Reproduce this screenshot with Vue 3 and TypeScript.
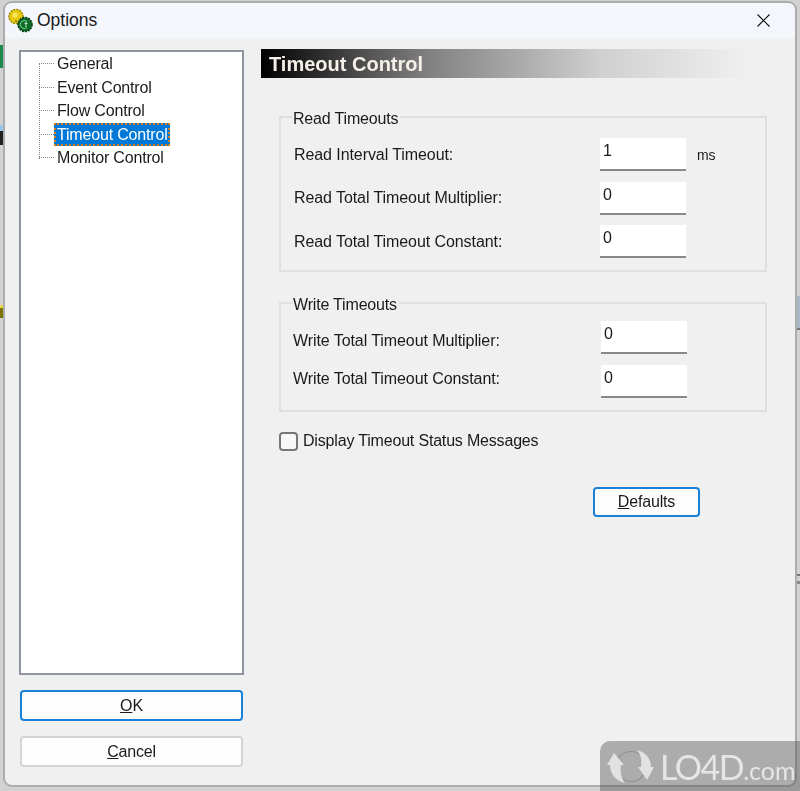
<script setup lang="ts">
interface Field {
  label: string
  value: string
  unit?: string
}

const treeItems = ['General', 'Event Control', 'Flow Control', 'Timeout Control', 'Monitor Control']
const selected = 'Timeout Control'

const readFields: Field[] = [
  { label: 'Read Interval Timeout:', value: '1', unit: 'ms' },
  { label: 'Read Total Timeout Multiplier:', value: '0' },
  { label: 'Read Total Timeout Constant:', value: '0' },
]

const writeFields: Field[] = [
  { label: 'Write Total Timeout Multiplier:', value: '0' },
  { label: 'Write Total Timeout Constant:', value: '0' },
]
</script>

<template>
  <div class="desktop">
    <div class="dialog">
      <header class="titlebar">
        <svg class="app-icon" width="27" height="26" viewBox="0 0 27 26">
          <circle cx="8" cy="8.5" r="7" fill="#e8c810" stroke="#a08c00" stroke-width="1.6" stroke-dasharray="2 1" />
          <circle cx="7" cy="7" r="2.5" fill="#f7ea5a" />
          <circle cx="8" cy="13" r="1" fill="#8a7a00" />
          <circle cx="17" cy="16.5" r="7" fill="#0c6b26" stroke="#07401a" stroke-width="1.6" stroke-dasharray="2 1" />
          <path d="M19 13.5 A4 4 0 1 0 19 19.5" fill="none" stroke="#7fd095" stroke-width="1" />
          <path d="M18 14 V19 M16.5 15.5 H19.5" stroke="#b6e6c2" stroke-width="1" fill="none" />
        </svg>
        <span class="title">Options</span>
        <svg class="close" width="13" height="13" viewBox="0 0 13 13">
          <path d="M0.5 0.5 L12.5 12.5 M12.5 0.5 L0.5 12.5" stroke="#111" stroke-width="1.1" fill="none" />
        </svg>
      </header>

      <div class="content">
        <aside class="left">
          <div class="tree">
            <ul class="tree-list">
              <li v-for="item in treeItems" :key="item" class="tree-item">
                <span class="tree-dash"></span>
                <span class="tree-label" :class="{ selected: item === selected }">{{ item }}</span>
              </li>
            </ul>
          </div>
          <button class="btn btn-default btn-wide"><u>O</u>K</button>
          <button class="btn btn-wide"><u>C</u>ancel</button>
        </aside>

        <main class="right">
          <h1 class="banner">Timeout Control</h1>

          <fieldset class="group group-read">
            <legend>Read Timeouts</legend>
            <div v-for="f in readFields" :key="f.label" class="field">
              <label>{{ f.label }}</label>
              <div class="input">{{ f.value }}</div>
              <span v-if="f.unit" class="unit">{{ f.unit }}</span>
            </div>
          </fieldset>

          <fieldset class="group group-write">
            <legend>Write Timeouts</legend>
            <div v-for="f in writeFields" :key="f.label" class="field">
              <label>{{ f.label }}</label>
              <div class="input">{{ f.value }}</div>
            </div>
          </fieldset>

          <div class="check-row">
            <span class="checkbox"></span>
            <span>Display Timeout Status Messages</span>
          </div>

          <div class="defaults-row">
            <button class="btn btn-default btn-defaults"><u>D</u>efaults</button>
          </div>
        </main>
      </div>
    </div>

    <div class="watermark">
      <svg class="wm-logo" width="50" height="37" viewBox="0 0 50 37">
        <circle cx="24" cy="18.5" r="15" fill="none" stroke="#8f8f8f" stroke-width="1.2" />
        <path d="M7 5 L0 17 H3 C3 26 9 33 18 35 C14 30 13 24 14 17 H17 Z" fill="#e2e2e2" />
        <path d="M40 32 L47 19 H44 C44 10 38 4 30 2 C34 7 35 12 34 19 H31 Z" fill="#e2e2e2" />
      </svg>
      <span class="wm-text">LO4D<small>.com</small></span>
    </div>
  </div>
</template>

<style scoped>
.desktop {
  position: relative;
  box-sizing: border-box;
  width: 800px;
  height: 791px;
  padding: 1px 3px 4px 3px;
  overflow: hidden;
  /* bits of the windows behind the dialog */
  background:
    linear-gradient(#1c8a4c, #1c8a4c) 0 45px / 4px 23px no-repeat,
    linear-gradient(#9fc4e4, #9fc4e4) 0 125px / 4px 6px no-repeat,
    linear-gradient(#222, #222) 0 131px / 4px 14px no-repeat,
    linear-gradient(#e6d84a, #e6d84a) 0 305px / 4px 3px no-repeat,
    linear-gradient(#7d7400, #7d7400) 0 308px / 4px 10px no-repeat,
    linear-gradient(#a9b6c6, #a9b6c6) 797px 296px / 3px 32px no-repeat,
    linear-gradient(#777, #777) 797px 328px / 3px 2px no-repeat,
    linear-gradient(#777, #777) 797px 574px / 3px 2px no-repeat,
    linear-gradient(#888, #888) 797px 581px / 3px 3px no-repeat,
    #d2d2d2;
  font-family: "Liberation Sans", Arial, sans-serif;
  font-size: 16px;
  letter-spacing: -0.18px;
  color: #1a1a1a;
}

.dialog {
  box-sizing: border-box;
  height: 100%;
  display: flex;
  flex-direction: column;
  background: #f0f0f0;
  border: 2px solid #adadad;
  border-radius: 9px;
  overflow: hidden;
  filter: blur(0.3px);
}

.titlebar {
  flex: none;
  height: 35px;
  display: flex;
  align-items: center;
  padding: 0 25px 0 3px;
  background: #f3f6fb;
}

.app-icon {
  margin-right: 2px;
}

.title {
  font-size: 17.5px;
  letter-spacing: 0;
  flex: 1;
}

.content {
  flex: 1;
  display: flex;
  min-height: 0;
}

.left {
  flex: none;
  width: 238px;
  padding: 12px 0 0 14px;
  box-sizing: border-box;
  display: flex;
  flex-direction: column;
}

.tree {
  box-sizing: border-box;
  width: 225px;
  height: 625px;
  background: #fff;
  border: 2px solid #8f96a0;
}

.tree-list {
  position: relative;
  list-style: none;
  margin: 0;
  padding: 0 0 0 18px;
}

.tree-list::before {
  content: '';
  position: absolute;
  left: 18px;
  top: 11px;
  bottom: 11px;
  border-left: 1px dotted #888;
}

.tree-item {
  height: 23.5px;
  display: flex;
  align-items: center;
}

.tree-dash {
  width: 15px;
  border-top: 1px dotted #888;
}

.tree-label {
  padding: 0 0 0 1px;
  line-height: 19px;
  white-space: nowrap;
  border: 2px solid transparent;
}

.tree-label.selected {
  background: #0078d7;
  color: #fff;
  border: 2px dotted #d9791a;
}

.btn {
  box-sizing: border-box;
  font: inherit;
  letter-spacing: inherit;
  color: inherit;
  background: #fdfdfd;
  border: 2px solid #d4d4d4;
  border-radius: 4px;
  padding: 0;
}

.btn-default {
  border-color: #1a80d8;
}

.btn-wide {
  width: 223px;
  height: 31px;
  margin-left: 1px;
}

.btn-wide.btn-default {
  margin-top: 15px;
  margin-bottom: 15px;
}

.right {
  flex: 1;
  min-width: 0;
  padding: 11px 0 0 18px;
  box-sizing: border-box;
}

.banner {
  box-sizing: border-box;
  margin: 0;
  width: 487px;
  height: 29px;
  padding-left: 8px;
  font-size: 20px;
  letter-spacing: 0;
  line-height: 30px;
  font-weight: 700;
  color: #f6f1e8;
  background: linear-gradient(90deg, #000 0%, #808080 34%, #d0d0d0 70%, #f0f0f0 100%);
}

.group {
  box-sizing: border-box;
  width: 488px;
  margin: 0 0 0 18px;
  padding: 0;
  border: 2px solid #dfdfdf;
}

.group legend {
  margin-left: 11px;
  padding: 4px 2px 0 1px;
  line-height: 20px;
}

.group-read {
  height: 167px;
  margin-top: 27px;
  padding-top: 4px;
}

.group-write {
  height: 121px;
  margin-top: 19px;
  padding-top: 1px;
}

.field {
  display: flex;
  align-items: center;
  height: 43.5px;
  letter-spacing: -0.08px;
}

.field label {
  width: 319px;
  padding-left: 13px;
  box-sizing: border-box;
}

.group-write .field label {
  width: 320px;
  padding-left: 12px;
}

/* the labels sit a little off their inputs in the second group */
.group-write .field:nth-of-type(1) label {
  margin-top: 6px;
}

.group-write .field:nth-of-type(2) label {
  margin-bottom: 4px;
}

.input {
  box-sizing: border-box;
  width: 86px;
  height: 33px;
  padding: 2px 0 0 3px;
  background: #fff;
  border-bottom: 2px solid #888;
  line-height: 22px;
}

.unit {
  margin-left: 11px;
  font-size: 14px;
}

.check-row {
  display: flex;
  align-items: center;
  gap: 5px;
  margin: 19px 0 0 18px;
  height: 20px;
}

.checkbox {
  box-sizing: border-box;
  width: 19px;
  height: 19px;
  border: 2px solid #777;
  border-radius: 4px;
  background: #f8f8f8;
}

.defaults-row {
  margin: 36px 0 0 332px;
}

.btn-defaults {
  width: 107px;
  height: 30px;
}

.watermark {
  position: absolute;
  right: 0;
  bottom: 0;
  width: 200px;
  height: 50px;
  display: flex;
  align-items: center;
  gap: 3px;
  padding-left: 7px;
  box-sizing: border-box;
  background: rgba(70, 70, 70, 0.4);
  border-top-left-radius: 10px;
}

.wm-text {
  color: #e6e6e6;
  font-family: Lato, "Liberation Sans", sans-serif;
  font-size: 34px;
  letter-spacing: -1.5px;
  white-space: nowrap;
}

.wm-text small {
  font-size: 25px;
  letter-spacing: 0;
}
</style>
